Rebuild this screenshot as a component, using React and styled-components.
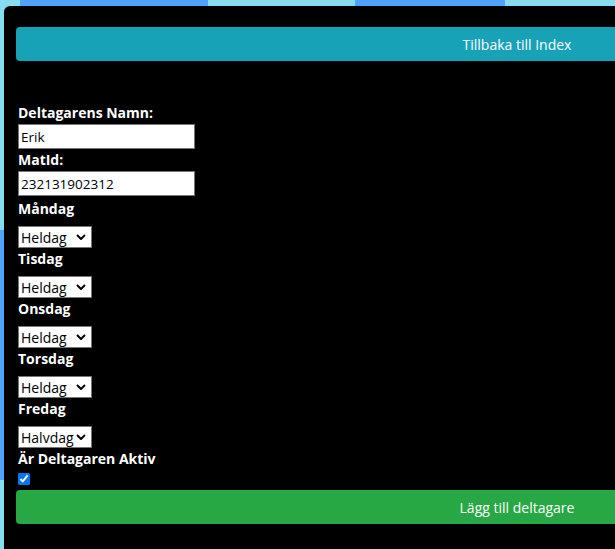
import React from "react";
import styled, { createGlobalStyle } from "styled-components";

const GlobalStyle = createGlobalStyle`
  html, body {
    margin: 0;
    padding: 0;
    overflow: hidden;
  }
  body {
    font-family: "Open Sans", "Liberation Sans", sans-serif;
    background:
      linear-gradient(to right, #87dcf0 0 20px, #4fa2fd 20px 208px, #87dcf0 208px 355px, #4fa2fd 355px 505px, #87dcf0 505px) top left / 100% 6px no-repeat,
      linear-gradient(to bottom, #87dcf0 0 230px, #4fa2fd 230px 480px, #87dcf0 480px) top left / 4px 100% no-repeat,
      #87dcf0;
  }
`;

const Panel = styled.div`
  margin: 6px 0 0 4px;
  width: 1026px;
  min-height: calc(100vh - 6px);
  box-sizing: border-box;
  background: #000;
  border-top-left-radius: 6px;
  padding: 21px 12px 0 12px;
`;

const WideButton = styled.button`
  display: block;
  width: 100%;
  height: 34px;
  border: none;
  border-radius: 4px;
  background: ${(p) => p.$bg};
  color: #fff;
  font-family: "Open Sans", "Liberation Sans", sans-serif;
  font-size: 14px;
  cursor: pointer;
`;

const Form = styled.form`
  padding: 44px 0 0 2px;
  display: flex;
  flex-direction: column;
  align-items: flex-start;
`;

const Label = styled.label`
  display: block;
  color: #fff;
  font-weight: 700;
  font-size: 14px;
  line-height: 16px;
  margin-top: ${(p) => p.$top || 0}px;
`;

const TextInput = styled.input`
  box-sizing: border-box;
  width: 177px;
  height: 25px;
  margin-top: 3px;
  padding: 1px 2px;
  border: 1px solid #767676;
  background: #fff;
  font-family: "Open Sans", "Liberation Sans", sans-serif;
  font-size: 13.5px;
  color: #000;
`;

const Select = styled.select`
  appearance: none;
  box-sizing: border-box;
  width: 74px;
  height: 22px;
  margin-top: 9px;
  padding: 0 0 0 2px;
  border: 1px solid #767676;
  border-radius: 0;
  background: #fff url("data:image/svg+xml;utf8,<svg xmlns='http://www.w3.org/2000/svg' width='10' height='6' viewBox='0 0 10 6'><path d='M1 1l4 4 4-4' fill='none' stroke='black' stroke-width='2'/></svg>") no-repeat right 5px center;
  font-family: "Open Sans", "Liberation Sans", sans-serif;
  font-size: 14px;
  color: #000;
`;

const Check = styled.input`
  margin: 6px 0 5px 0;
  width: 12px;
  height: 12px;
`;

const days = [
  { name: "Måndag", value: "Heldag" },
  { name: "Tisdag", value: "Heldag" },
  { name: "Onsdag", value: "Heldag" },
  { name: "Torsdag", value: "Heldag" },
  { name: "Fredag", value: "Halvdag" },
];

export default function App() {
  return (
    <>
      <GlobalStyle />
      <Panel>
        <WideButton type="button" $bg="#17a2b8">
          Tillbaka till Index
        </WideButton>
        <Form onSubmit={(e) => e.preventDefault()}>
          <Label>Deltagarens Namn:</Label>
          <TextInput defaultValue="Erik" />
          <Label $top={3}>MatId:</Label>
          <TextInput defaultValue="232131902312" />
          {days.map((d, i) => (
            <React.Fragment key={d.name}>
              <Label $top={i === 0 ? 5 : 3}>{d.name}</Label>
              <Select defaultValue={d.value}>
                <option>Heldag</option>
                <option>Halvdag</option>
              </Select>
            </React.Fragment>
          ))}
          <Label $top={3}>Är Deltagaren Aktiv</Label>
          <Check type="checkbox" defaultChecked />
        </Form>
        <WideButton type="submit" $bg="#28a745">
          Lägg till deltagare
        </WideButton>
      </Panel>
    </>
  );
}
